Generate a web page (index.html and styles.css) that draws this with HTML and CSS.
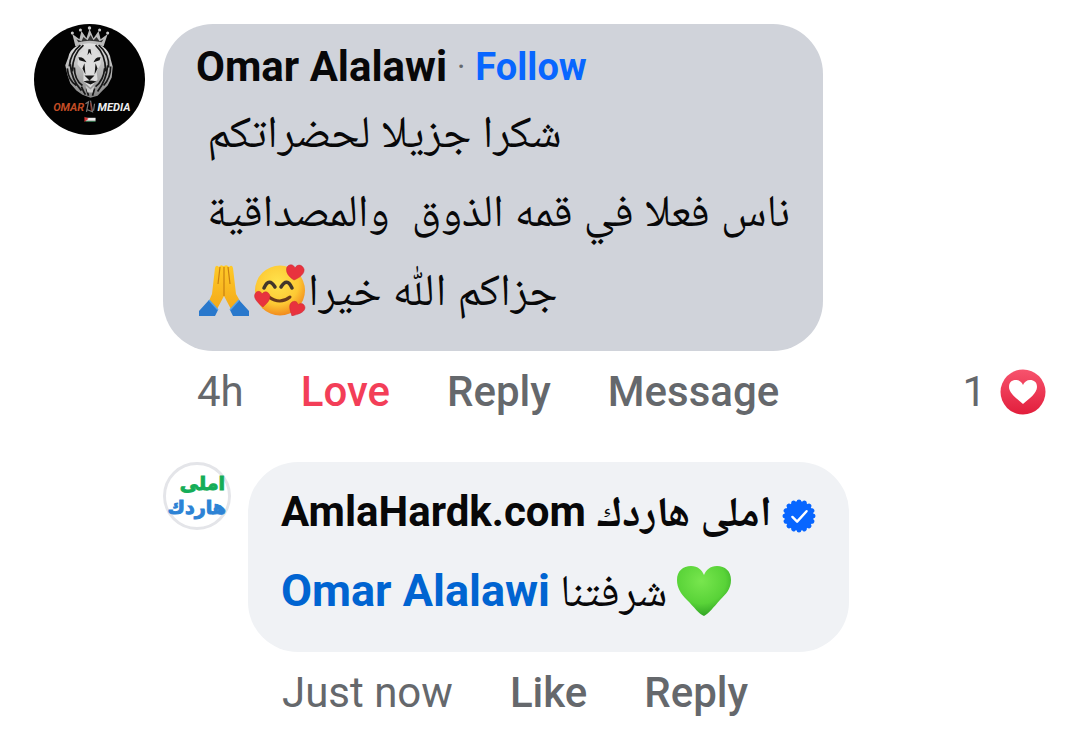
FILE: index.html
```html
<!DOCTYPE html>
<html lang="en">

<head>
  <meta charset="UTF-8">
  <meta name="viewport" content="width=device-width, initial-scale=1">
  <title>Comments</title>
  <link rel="stylesheet" href="styles.css">
</head>

<body>
  <main class="thread">
    <article class="comment">
      <svg class="avatar" viewBox="0 0 110 110" role="img" aria-label="Omar Media">
        <defs>
          <linearGradient id="mane" x1="0" y1="0" x2="0" y2="1">
            <stop offset="0" stop-color="#e4e4e4"/>
            <stop offset="1" stop-color="#858585"/>
          </linearGradient>
        </defs>
        <circle cx="55" cy="55" r="55" fill="#020202"/>
        <!-- crown -->
        <path d="M41 22 38 10 45 15 47 7 52 14 55 5 59 14 64 7 66 15 73 10 69 22Q55 18 41 22Z" fill="#bbb"/>
        <path d="M44 18 42 15 47 17 49 13 53 16 56 11 59 16 62 13 65 17 69 15 67 18Q55 15 44 18Z" fill="#333"/>
        <g fill="#ccc"><circle cx="38" cy="9" r="1.5"/><circle cx="46" cy="6" r="1.5"/><circle cx="55" cy="4" r="1.7"/><circle cx="65" cy="6" r="1.5"/><circle cx="73" cy="9" r="1.5"/></g>
        <!-- mane -->
        <path d="M42 22Q54 16 68 22Q75 27 76 35L78 42 77 53 73 61 68 66 63 71 56 73 48 70 42 66 36 59 33 50 31 41 34 33Q35 26 42 22Z" fill="url(#mane)"/>
        <path d="M46 21Q36 29 35 42M49 21Q38 30 38 47M64 21Q75 30 74 43M61 21Q71 30 71 47M33 44Q34 56 42 61M36 40Q37 55 47 66M76 42Q76 53 69 61M73 41Q72 55 63 67M40 43Q40 55 48 61M70 44Q69 56 61 62M47 62Q49 67 51 70M52 64 54 71M60 64 58 71" fill="none" stroke="#171717" stroke-width="1.7"/>
        <!-- face -->
        <path d="M45 29 51 25 55 28 60 25 66 30 66 40 62 47 63 55 56 63 49 57 49 47 43 40Z" fill="#ddd"/>
        <path d="M44 33Q49 32 52 38L45 36ZM66 33Q61 32 59 38L65 36ZM50 51H60L55 56ZM54 25 53 31 55 28 57 31 56 25ZM49 57Q55 55 62 57L56 60ZM50 39 51 50 48 44ZM61 39 60 50 63 44Z" fill="#151515"/>
        <path d="M51 61 56 65 60 61 58 68H53Z" fill="#ccc"/>
        <g class="logo-text">
          <text x="19" y="86" fill="#c14c25">OMAR</text>
          <text x="63" y="86" fill="#eee">MEDIA</text>
        </g>
        <path d="M51 79 54 77 52 87M56 76 58 87 53 85M60 79 59 86" fill="none" stroke="#777" stroke-width="1.2"/>
        <path d="M56 78 57 86" stroke="#9a372c"/>
        <path d="M51 92H61V94H51Z" fill="#111"/>
        <path d="M51 93H61V96H51Z" fill="#eee"/>
        <path d="M51 96H61V97H51Z" fill="#397b54"/>
        <path d="M50 92 54 94 50 97Z" fill="#d53434"/>
      </svg>
      <div class="body">
        <div class="bubble bubble-dark">
          <div class="head">
            <a class="name" href="#">Omar Alalawi</a>
            <span class="dot">·</span>
            <button class="follow" type="button">Follow</button>
          </div>
          <p class="line" lang="ar" dir="rtl">شكرا جزيلا لحضراتكم&nbsp;</p>
          <p class="line" lang="ar" dir="rtl">ناس فعلا في قمه الذوق&nbsp; والمصداقية&nbsp;</p>
          <p class="line" lang="ar" dir="rtl">جزاكم اللّٰه خيرا<svg class="emoji" viewBox="0 0 52 52" role="img" aria-label="Smiling face with hearts">
              <defs>
                <radialGradient id="face" cx=".45" cy=".35" r=".65">
                  <stop offset="0" stop-color="#ffe34c"/>
                  <stop offset=".65" stop-color="#fdc934"/>
                  <stop offset="1" stop-color="#f28b1e"/>
                </radialGradient>
              </defs>
              <circle cx="26" cy="26.500" r="25" fill="url(#face)"/>
              <path d="M10 24Q15 13 21 23M27 23Q33 13 38 24" fill="none" stroke="#42372b" stroke-width="3.500" stroke-linecap="round"/>
              <path d="M15 33Q26 41 36 33" fill="none" stroke="#68391c" stroke-width="3" stroke-linecap="round"/>
              <g fill="#e8323e" stroke="#c92935" stroke-width=".5">
                <path d="M40 16C35 13 31 8 33 3C36-1 40 1 41 4C43 0 48 0 50 5C51 10 45 14 40 16Z"/>
                <path d="M9 43C4 39-1 34 1 30C3 26 7 27 8 30C11 26 15 28 16 32C16 37 12 40 9 43Z"/>
                <path d="M38 52C36 46 34 41 38 38C42 36 44 39 44 41C47 38 51 40 51 44C50 49 44 50 38 52Z"/>
              </g>
            </svg><svg class="emoji" viewBox="0 0 52 52" role="img" aria-label="Folded hands">
              <defs>
                <linearGradient id="hands" x1="0" y1="0" x2="0" y2="1">
                  <stop offset="0" stop-color="#ffca28"/>
                  <stop offset="1" stop-color="#f3a819"/>
                </linearGradient>
              </defs>
              <path d="M25 2Q23 0 21 3Q18 0 17 4L14 30 11 37 18 47 26 32 34 47 42 37 38 30 35 4Q34 0 31 3Q29 0 26 2Z" fill="url(#hands)"/>
              <path d="M22 3 20 20M30 3 32 20M26 3V32" fill="none" stroke="#c98012" stroke-width="1.200"/>
              <path d="M11 36 20 46 17 52H1V47ZM41 36 32 46 35 52H51V47Z" fill="#2978cc"/>
              <path d="M11 36 20 46M41 36 32 46" stroke="#55a1e8" stroke-width="1.500"/>
            </svg></p>
        </div>
        <footer class="actions">
          <span class="time">4h</span>
          <button class="action loved" type="button">Love</button>
          <button class="action" type="button">Reply</button>
          <button class="action" type="button">Message</button>
          <span class="count">1</span>
          <svg class="reaction" viewBox="0 0 46 46" role="img" aria-label="Love">
            <defs>
              <linearGradient id="love" x1="0" y1="0" x2="0" y2="1">
                <stop offset="0" stop-color="#f7536d"/>
                <stop offset="1" stop-color="#e21e3c"/>
              </linearGradient>
            </defs>
            <circle cx="23" cy="23" r="22.500" fill="url(#love)"/>
            <path d="M23 35C17 30 9 24 9 18C9 12 13 11 16 11C19 11 22 13 23 16C24 13 27 11 30 11C34 11 37 13 37 18C37 24 29 30 23 35Z" fill="#fff"/>
          </svg>
        </footer>

        <article class="comment reply">
          <svg class="avatar avatar-small" viewBox="0 0 68 68" role="img" aria-label="املى هاردك">
            <circle cx="34" cy="34" r="32.500" fill="#fff" stroke="#e4e5e9" stroke-width="3"/>
            <g class="logo-arabic" lang="ar">
              <text x="62" y="28" fill="#15ad58" stroke="#15ad58">املى</text>
              <text x="63" y="52" fill="#2d83d5" stroke="#2d83d5">هاردك</text>
            </g>
          </svg>
          <div class="body">
            <div class="bubble bubble-light">
              <div class="line head">
                <a class="name" href="#">AmlaHardk.com <span lang="ar">املى هاردك</span></a>
                <svg class="badge" viewBox="0 0 36 36" role="img" aria-label="Verified">
                  <path d="M18 3V33M3 18H33M7.400 7.400 28.600 28.600M28.600 7.400 7.400 28.600M12.300 4.200 23.700 31.800M23.700 4.200 12.300 31.800M4.200 12.300 31.800 23.700M31.800 12.300 4.200 23.700" stroke="#0866ff" stroke-width="5" stroke-linecap="round"/>
                  <circle cx="18" cy="18" r="15.500" fill="#0866ff"/>
                  <path d="M11 19 16 24 26 13" fill="none" stroke="#fff" stroke-width="2.600" stroke-linecap="round" stroke-linejoin="round"/>
                </svg>
              </div>
              <p class="line head message">
                <a class="mention" href="#">Omar Alalawi</a>
                <span lang="ar">شرفتنا</span>
                <svg class="heart" viewBox="0 0 54 50" role="img" aria-label="Green heart">
                  <defs>
                    <radialGradient id="green" cx=".45" cy=".3" r=".75">
                      <stop offset="0" stop-color="#78e64e"/>
                      <stop offset=".6" stop-color="#59d338"/>
                      <stop offset="1" stop-color="#299c20"/>
                    </radialGradient>
                  </defs>
                  <path d="M27 50C22 48 17 41 10 34C4 28 0 22 0 14C0 5 6 0 14 0C21 0 25 4 27 9C29 4 33 0 40 0C48 0 54 5 54 14C54 23 49 28 43 34C37 41 31 48 27 50Z" fill="url(#green)"/>
                </svg>
              </p>
            </div>
            <footer class="actions">
              <span class="time">Just now</span>
              <button class="action" type="button">Like</button>
              <button class="action" type="button">Reply</button>
            </footer>
          </div>
        </article>
      </div>
    </article>
  </main>
</body>

</html>
```

FILE: styles.css
```css
* {
  box-sizing: border-box;
}

body {
  margin: 0;
  background: #fff;
  color: #080809;
  font-family: Roboto, "Noto Naskh Arabic", "DejaVu Sans", sans-serif;
  font-size: 42px;
}

a {
  color: inherit;
  text-decoration: none;
}

button {
  padding: 0;
  border: 0;
  background: none;
  color: inherit;
  font: inherit;
  cursor: pointer;
}

p {
  margin: 0;
}

svg {
  flex: none;
}

.thread {
  padding: 24px 34px;
}

.comment {
  display: flex;
  align-items: flex-start;
  gap: 18px;
}

.body {
  flex: 1;
  min-width: 0;
}

.avatar {
  width: 111px;
  height: 111px;
}

.avatar-small {
  width: 68px;
  height: 68px;
}

.logo-text {
  font: italic bold 11px Roboto, sans-serif;
}

.logo-arabic {
  font: bold 19px "DejaVu Sans", sans-serif;
  text-anchor: end;
}

.bubble {
  width: fit-content;
  max-width: 100%;
  padding: 18px 33px 22px;
  border-radius: 50px;
}

.bubble-dark {
  background: #d0d3da;
}

.bubble-light {
  padding: 10px 33px 22px;
  background: #f0f2f5;
}

.head {
  display: flex;
  align-items: center;
  gap: 10px;
  line-height: 50px;
}

.name,
.mention {
  font-weight: 700;
}

.dot {
  color: #65686c;
  font-size: 32px;
}

.follow {
  color: #0866ff;
  font-size: 38px;
  font-weight: 700;
}

.mention {
  color: #0064d1;
}

.line {
  line-height: 79px;
  text-align: left;
}

.line[dir="rtl"],
.message {
  font-size: 45px;
}

.emoji {
  width: 52px;
  height: 52px;
  margin: 0 2px;
  vertical-align: -11px;
}

.badge {
  width: 34px;
  height: 34px;
  margin-top: 8px;
}

.heart {
  width: 54px;
  height: 50px;
}

.actions {
  display: flex;
  align-items: center;
  gap: 57px;
  padding-left: 34px;
  color: #65686c;
  line-height: 82px;
}

.action {
  font-weight: 500;
}

.loved {
  color: #f33e58;
}

.count {
  margin-left: auto;
}

.reaction {
  width: 46px;
  height: 46px;
  margin-left: -43px;
}

.reply {
  gap: 17px;
  margin-top: 29px;
}
```
